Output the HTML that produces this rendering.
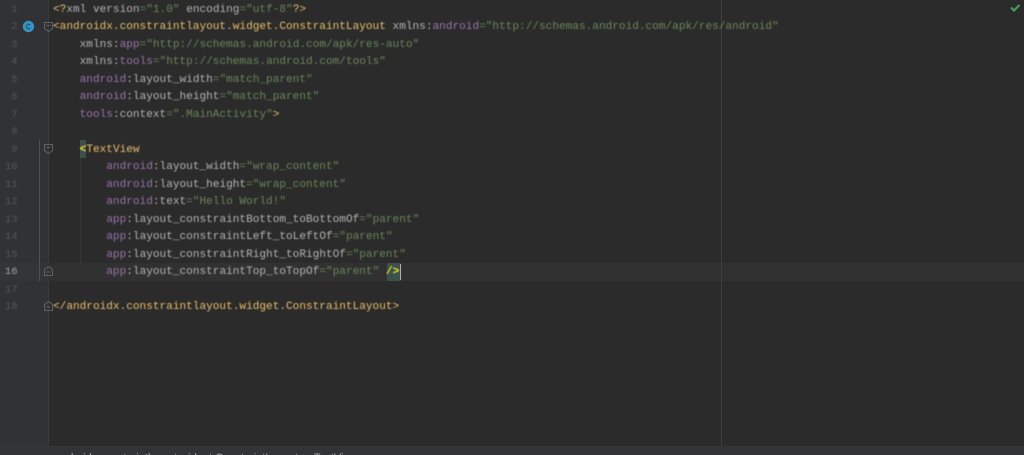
<!DOCTYPE html>
<html>
<head>
<meta charset="utf-8">
<style>
html,body{margin:0;padding:0;background:#2b2b2b;}
#root{position:relative;width:1024px;height:455px;overflow:hidden;background:#2b2b2b;}
.gutter{position:absolute;left:0;top:0;width:48px;height:446px;background:#303234;border-right:1px solid #383a3b;}
.margin{position:absolute;left:721px;top:0;width:1px;height:446px;background:#3f3f3f;}
.cur{position:absolute;left:0;top:263px;width:1024px;height:17.5px;background:#313131;}
.curg{position:absolute;left:0;top:263px;width:48px;height:17.5px;background:#333537;}
.bar{position:absolute;left:0;top:446px;width:1024px;height:9px;background:#313335;border-top:1px solid #383838;box-sizing:border-box;overflow:hidden;}
.crumb{position:absolute;left:55px;top:4px;font:11px/14px "Liberation Sans",sans-serif;color:#9ea5aa;white-space:pre;word-spacing:1.5px;filter:blur(.3px);}
.hl{position:absolute;background:#3b514d;}
.lines{position:absolute;left:0;top:2px;filter:blur(.4px);}
.l,.n{position:absolute;font-family:"Liberation Mono",monospace;font-size:11.1px;line-height:17.47px;height:17.47px;white-space:pre;}
.l{color:#a9b7c6;left:53px;}
.n{left:0;width:17.5px;text-align:right;color:#555859;font-size:10.5px;}
.t{color:#e8bf6a}.a{color:#9876aa}.s{color:#6a8759}.x{color:#b4b4b4}.y{color:#f0e020;font-weight:bold}
.caret{position:absolute;left:399.5px;top:264px;width:1.5px;height:16px;background:#b0b0b0;}
.w{position:absolute;left:79.5px;top:158px;width:1px;height:105px;background:#353535;}
.w2{position:absolute;left:39px;top:140px;width:1px;height:141px;background:#43564f;}
svg{position:absolute;left:0;top:0;}
</style>
</head>
<body>
<div id="root">
<div class="gutter"></div>
<div class="cur"></div>
<div class="curg"></div>
<div class="margin"></div>
<div class="w"></div>
<div class="w2"></div>
<div class="hl" style="left:79.5px;top:140px;width:6.7px;height:18px"></div>
<div class="hl" style="left:386.5px;top:263px;width:14px;height:18px"></div>
<svg width="1024" height="455" viewBox="0 0 1024 455" fill="none">
<circle cx="28.5" cy="26.5" r="5.7" fill="#3592c4"/>
<path d="M30.3 25a2.2 2.2 0 1 0 0 3" stroke="#1d4f68" stroke-width="1"/>
<g stroke="#5f6264" stroke-width="1">
<path d="M44.5 22.5h8v6l-4 3-4-3z"/><path d="M46.5 25.5h4"/>
<path d="M44.5 144.5h8v6l-4 3-4-3z"/><path d="M46.5 147.5h4"/>
<path d="M44.5 275.5v-6l4-3 4 3v6z"/><path d="M46.5 272h4"/>
<path d="M44.5 310.5v-6l4-3 4 3v6z"/><path d="M46.5 307h4"/>
</g>
<path d="M1011 7.5l3 3 5.5-5.5" stroke="#499c54" stroke-width="2.2"/>
</svg>
<div class="lines">
<div class="n" style="top:0">1</div>
<div class="n" style="top:17.47px">2</div>
<div class="n" style="top:34.94px">3</div>
<div class="n" style="top:52.41px">4</div>
<div class="n" style="top:69.88px">5</div>
<div class="n" style="top:87.35px">6</div>
<div class="n" style="top:104.82px">7</div>
<div class="n" style="top:122.29px">8</div>
<div class="n" style="top:139.76px">9</div>
<div class="n" style="top:157.23px">10</div>
<div class="n" style="top:174.7px">11</div>
<div class="n" style="top:192.17px">12</div>
<div class="n" style="top:209.64px">13</div>
<div class="n" style="top:227.11px">14</div>
<div class="n" style="top:244.58px">15</div>
<div class="n" style="top:262.05px;color:#a4a3a3">16</div>
<div class="n" style="top:279.52px">17</div>
<div class="n" style="top:296.99px">18</div>

<div class="l" style="top:0"><span class="t">&lt;?</span><span class="x">xml version</span><span class="s">="1.0"</span> <span class="x">encoding</span><span class="s">="utf-8"</span><span class="t">?&gt;</span></div>
<div class="l" style="top:17.47px"><span class="t">&lt;androidx.constraintlayout.widget.ConstraintLayout</span> <span class="x">xmlns:</span><span class="a">android</span><span class="s">="http://schemas.android.com/apk/res/android"</span></div>
<div class="l" style="top:34.94px">    <span class="x">xmlns:</span><span class="a">app</span><span class="s">="http://schemas.android.com/apk/res-auto"</span></div>
<div class="l" style="top:52.41px">    <span class="x">xmlns:</span><span class="a">tools</span><span class="s">="http://schemas.android.com/tools"</span></div>
<div class="l" style="top:69.88px">    <span class="a">android</span><span class="x">:layout_width</span><span class="s">="match_parent"</span></div>
<div class="l" style="top:87.35px">    <span class="a">android</span><span class="x">:layout_height</span><span class="s">="match_parent"</span></div>
<div class="l" style="top:104.82px">    <span class="a">tools</span><span class="x">:context</span><span class="s">=".MainActivity"</span><span class="t">&gt;</span></div>
<div class="l" style="top:139.76px">    <span class="y">&lt;</span><span class="t">TextView</span></div>
<div class="l" style="top:157.23px">        <span class="a">android</span><span class="x">:layout_width</span><span class="s">="wrap_content"</span></div>
<div class="l" style="top:174.7px">        <span class="a">android</span><span class="x">:layout_height</span><span class="s">="wrap_content"</span></div>
<div class="l" style="top:192.17px">        <span class="a">android</span><span class="x">:text</span><span class="s">="Hello World!"</span></div>
<div class="l" style="top:209.64px">        <span class="a">app</span><span class="x">:layout_constraintBottom_toBottomOf</span><span class="s">="parent"</span></div>
<div class="l" style="top:227.11px">        <span class="a">app</span><span class="x">:layout_constraintLeft_toLeftOf</span><span class="s">="parent"</span></div>
<div class="l" style="top:244.58px">        <span class="a">app</span><span class="x">:layout_constraintRight_toRightOf</span><span class="s">="parent"</span></div>
<div class="l" style="top:262.05px">        <span class="a">app</span><span class="x">:layout_constraintTop_toTopOf</span><span class="s">="parent"</span> <span class="y">/&gt;</span></div>
<div class="l" style="top:296.99px"><span class="t">&lt;/androidx.constraintlayout.widget.ConstraintLayout&gt;</span></div>
</div>
<div class="caret"></div>
<div class="bar"><div class="crumb">androidx.constraintlayout.widget.ConstraintLayout &gt; TextView</div></div>
</div>
</body>
</html>
